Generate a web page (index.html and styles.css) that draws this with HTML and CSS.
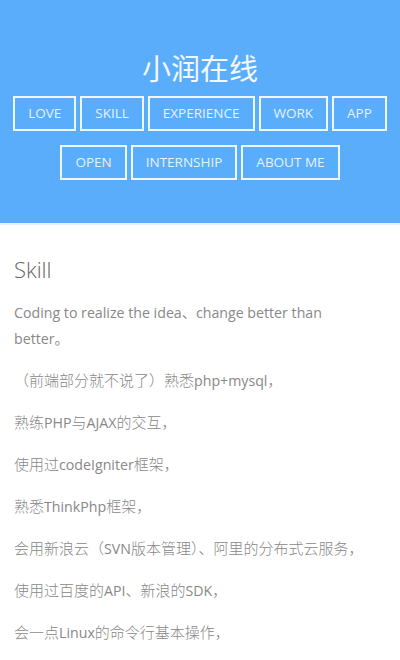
FILE: index.html
```html
<!DOCTYPE html>
<html lang="zh">
<head>
<meta charset="utf-8">
<title>小润在线</title>
<link rel="stylesheet" href="styles.css">
</head>
<body>
<header class="hero">
  <h1 class="title">小润在线</h1>
  <nav class="nav">
    <div class="nav-row">
      <a class="btn">LOVE</a>
      <a class="btn">SKILL</a>
      <a class="btn">EXPERIENCE</a>
      <a class="btn">WORK</a>
      <a class="btn">APP</a>
    </div>
    <div class="nav-row">
      <a class="btn">OPEN</a>
      <a class="btn">INTERNSHIP</a>
      <a class="btn">ABOUT ME</a>
    </div>
  </nav>
</header>
<main class="content">
  <h2 class="heading">Skill</h2>
  <p class="text">Coding to realize the idea、change better than better。</p>
  <p class="text"><span class="zh">（前端部分就不说了）熟悉</span>php+mysql<span class="zh">，</span></p>
  <p class="text"><span class="zh">熟练</span>PHP<span class="zh">与</span>AJAX<span class="zh">的交互，</span></p>
  <p class="text"><span class="zh">使用过</span>codeIgniter<span class="zh">框架，</span></p>
  <p class="text"><span class="zh">熟悉</span>ThinkPhp<span class="zh">框架，</span></p>
  <p class="text"><span class="zh">会用新浪云（</span>SVN<span class="zh">版本管理）、阿里的分布式云服务，</span></p>
  <p class="text"><span class="zh">使用过百度的</span>API<span class="zh">、新浪的</span>SDK<span class="zh">，</span></p>
  <p class="text"><span class="zh">会一点</span>Linux<span class="zh">的命令行基本操作，</span></p>
</main>
</body>
</html>
```

FILE: styles.css
```css
html, body {
  margin: 0;
  padding: 0;
  background: #ffffff;
}
body {
  font-family: "Open Sans", "Noto Sans CJK SC", sans-serif;
  overflow: hidden;
}
.hero {
  background: #5aadfb;
  height: 225px;
  box-sizing: border-box;
  padding-top: 46px;
  border-bottom: 2px solid #e4f1fd;
}
.title {
  margin: 0;
  text-align: center;
  color: #f2f8ff;
  font-family: "Noto Sans CJK SC", sans-serif;
  font-weight: 400;
  font-size: 29px;
  line-height: 42px;
}
.nav {
  margin-top: 8px;
  display: flex;
  flex-direction: column;
  align-items: center;
  gap: 14px;
}
.nav-row {
  display: flex;
  gap: 4px;
  justify-content: center;
}
.btn {
  display: block;
  box-sizing: border-box;
  height: 35px;
  line-height: 31px;
  padding: 0 13px;
  border: 2px solid #eef7ff;
  color: #e6f2ff;
  font-size: 13.5px;
}
.content {
  padding: 0 24px 0 14px;
}
.heading {
  margin: 29px 0 0;
  font-size: 22px;
  font-weight: 300;
  color: #666;
  line-height: 30px;
}
.text {
  margin: 16px 0 0;
  font-size: 14.2px;
  line-height: 26px;
  color: #888;
  font-weight: 400;
}
.zh {
  font-family: "Noto Sans CJK SC", sans-serif;
  font-size: 15px;
  font-weight: 300;
  line-height: 16px;
}
```
